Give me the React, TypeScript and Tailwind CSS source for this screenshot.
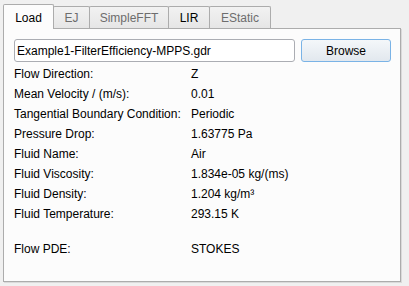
const TABS = [
  { name: 'Load', w: 'w-[51px]', active: true, dim: false },
  { name: 'EJ', w: 'w-[37px]', active: false, dim: true },
  { name: 'SimpleFFT', w: 'w-[80px]', active: false, dim: true },
  { name: 'LIR', w: 'w-[42px]', active: false, dim: false },
  { name: 'EStatic', w: 'w-[62px]', active: false, dim: true },
];

const ROWS: [string, string][] = [
  ['Flow Direction:', 'Z'],
  ['Mean Velocity / (m/s):', '0.01'],
  ['Tangential Boundary Condition:', 'Periodic'],
  ['Pressure Drop:', '1.63775 Pa'],
  ['Fluid Name:', 'Air'],
  ['Fluid Viscosity:', '1.834e-05 kg/(ms)'],
  ['Fluid Density:', '1.204 kg/m³'],
  ['Fluid Temperature:', '293.15 K'],
];

export default function App() {
  return (
    <div className="w-[409px] h-[286px] bg-[#f0f0f0] pt-[4px] pl-[3px] font-['Liberation_Sans',Arial,sans-serif] text-[12px] text-black overflow-hidden">
      {/* Tabs */}
      <div className="flex items-end h-[24px]">
        {TABS.map((t, i) =>
          t.active ? (
            <div
              key={t.name}
              className={`${t.w} h-[25px] -mb-px relative z-10 bg-[#fcfcfc] border-t border-l border-r border-[#acacac] rounded-t-[2px] text-center leading-[20px] pt-[3px]`}
            >
              {t.name}
            </div>
          ) : (
            <div
              key={t.name}
              className={`${t.w} h-[22px] ${i > 0 ? '-ml-px' : ''} bg-gradient-to-b from-[#f2f2f2] to-[#e6e6e6] border-t border-l border-r border-[#acacac] rounded-t-[2px] text-center leading-[20px] pt-[1px] ${t.dim ? 'text-[#6d6d6d]' : 'text-black'}`}
            >
              {t.name}
            </div>
          )
        )}
      </div>

      {/* Panel */}
      <div className="w-[398px] h-[254px] border border-[#acacac] bg-[#fcfcfc] shadow-[1px_1px_0_#dadada] pt-[10px] pl-[10px]">
        <div className="flex">
          <div className="w-[281px] h-[23px] border border-[#abadb3] rounded-[3px] bg-white px-[2px] flex items-center">
            Example1-FilterEfficiency-MPPS.gdr
          </div>
          <button className="ml-[6px] w-[90px] h-[23px] border border-[#7ab3e6] rounded-[3px] bg-gradient-to-b from-[#f4f7fa] to-[#e2e8ee] flex items-center justify-center">
            Browse
          </button>
        </div>

        <div className="mt-[2px]">
          {ROWS.map(([k, v]) => (
            <div key={k} className="grid grid-cols-[177px_1fr] h-[20px] leading-[20px]">
              <span>{k}</span>
              <span>{v}</span>
            </div>
          ))}
          <div className="grid grid-cols-[177px_1fr] h-[20px] leading-[20px] mt-[15px]">
            <span>Flow PDE:</span>
            <span>STOKES</span>
          </div>
        </div>
      </div>
    </div>
  );
}
